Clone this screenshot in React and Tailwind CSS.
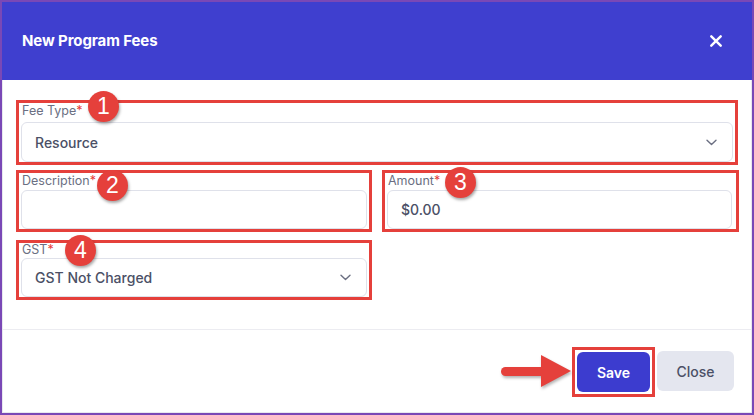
import React from 'react';

function Badge({ n, className }) {
  return (
    <div
      className={`absolute w-[31px] h-[31px] rounded-full bg-[#e5403b] text-white flex items-center justify-center text-[23px] leading-none font-['Liberation_Sans',Arial,sans-serif] shadow-[1px_2px_3px_rgba(0,0,0,0.35)] ${className}`}
    >
      {n}
    </div>
  );
}

function Label({ text, className = '' }) {
  return (
    <div className={`pl-[1px] text-[12.5px] text-[#6b6f82] ${className}`}>
      {text}
      <span className="text-[#e5403b]">*</span>
    </div>
  );
}

function Chevron() {
  return (
    <svg width="11" height="7" viewBox="0 0 11 7" fill="none">
      <path d="M1 1.2l4.5 4.3L10 1.2" stroke="#6b6f82" strokeWidth="1.4" strokeLinecap="round" strokeLinejoin="round" />
    </svg>
  );
}

function Select({ value, h }) {
  return (
    <div className={`${h} rounded-[6px] border border-[#dfe1ea] bg-white flex items-center justify-between pl-[13px] pr-[15px]`}>
      <span className="text-[14px] font-medium text-[#4b5066]">{value}</span>
      <Chevron />
    </div>
  );
}

export default function App() {
  return (
    <div className="w-[754px] h-[415px] bg-white border-2 border-[#7a48b6] flex flex-col font-['Inter',sans-serif]">
      <header className="h-[78px] shrink-0 bg-[#3f3fcf] flex items-center justify-between pl-[20px] pr-[30px]">
        <h1 className="text-white text-[15px] font-bold tracking-[-0.1px]">New Program Fees</h1>
        <svg width="12" height="12" viewBox="0 0 12 12" fill="none">
          <path d="M1.3 1.3l9.4 9.4M10.7 1.3l-9.4 9.4" stroke="white" strokeWidth="2.4" strokeLinecap="round" />
        </svg>
      </header>

      <div className="flex-1 flex flex-col border-x border-b border-[#e8e8ef]">
        <div className="px-[13px] pt-[20px] pb-[29px] flex flex-col">
          <div className="relative h-[65px] border-[3px] border-[#e5403b] px-[2px] flex flex-col">
            <Label text="Fee Type" className="h-[16px] leading-[16px]" />
            <div className="mt-[3px]">
              <Select value="Resource" h="h-[40px]" />
            </div>
            <Badge n="1" className="left-[69px] top-[-12px]" />
          </div>

          <div className="mt-[5px] grid grid-cols-[356px_357px] gap-x-[10px]">
            <div className="relative h-[62px] border-[3px] border-[#e5403b] px-[2px] flex flex-col">
              <Label text="Description" className="h-[16px] leading-[16px]" />
              <div className="mt-[1px] h-[39px] rounded-[6px] border border-[#dfe1ea] bg-white" />
              <Badge n="2" className="left-[78px] top-[-3px]" />
            </div>
            <div className="relative h-[62px] border-[3px] border-[#e5403b] pl-[2px] pr-[4px] flex flex-col">
              <Label text="Amount" className="h-[16px] leading-[16px]" />
              <div className="mt-[1px] h-[39px] rounded-[6px] border border-[#dfe1ea] bg-white flex items-center pl-[13px]">
                <span className="text-[14px] font-medium text-[#4b5066]">$0.00</span>
              </div>
              <Badge n="3" className="left-[60px] top-[-6px]" />
            </div>
          </div>

          <div className="mt-[8px] w-[356px] relative h-[60px] border-[3px] border-[#e5403b] px-[2px] flex flex-col">
            <Label text="GST" className="h-[15px] leading-[14px]" />
            <Select value="GST Not Charged" h="h-[39px]" />
            <Badge n="4" className="left-[46px] top-[-8px]" />
          </div>
        </div>

        <div className="flex-1 border-t border-[#ececf1] flex items-center justify-end pr-[17px]">
          <svg width="72" height="36" viewBox="0 0 72 36" className="drop-shadow-[1px_2px_1.5px_rgba(0,0,0,0.3)]">
            <rect x="1" y="14" width="44" height="9" rx="4.5" fill="#e5403b" />
            <path d="M41 2 L71 18 L41 34 Z" fill="#e5403b" />
          </svg>
          <div className="border-[3px] border-[#e5403b] p-[2px] mt-[2px]">
            <button className="w-[73px] h-[40px] rounded-[6px] bg-[#3c3ccf] text-white text-[14px] font-semibold">
              Save
            </button>
          </div>
          <button className="ml-[2px] w-[77px] h-[40px] rounded-[6px] bg-[#e4e6ef] text-[#4b5066] text-[14px] font-medium">
            Close
          </button>
        </div>
      </div>
    </div>
  );
}
